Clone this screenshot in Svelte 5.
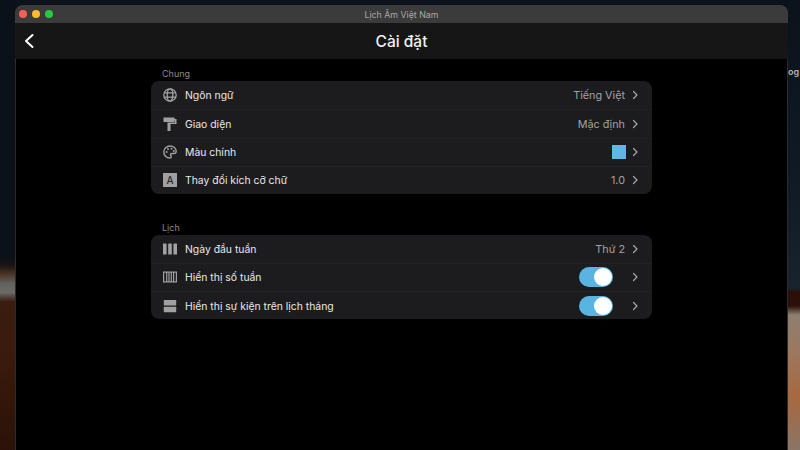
<script>
  const general = [
    { icon: 'globe', label: 'Ngôn ngữ', value: 'Tiếng Việt' },
    { icon: 'roller', label: 'Giao diện', value: 'Mặc định' },
    { icon: 'palette', label: 'Màu chính', swatch: true },
    { icon: 'font', label: 'Thay đổi kích cỡ chữ', value: '1.0' }
  ];
  const calendar = [
    { icon: 'cols', label: 'Ngày đầu tuần', value: 'Thứ 2' },
    { icon: 'week', label: 'Hiển thị số tuần', toggle: true },
    { icon: 'rows', label: 'Hiển thị sự kiện trên lịch tháng', toggle: true }
  ];
  const groups = [
    { title: 'Chung', rows: general },
    { title: 'Lịch', rows: calendar }
  ];
</script>

<div class="desktop">
  <div class="wall left"></div>
  <main class="window">
    <div class="titlebar">
      <div class="lights"><i class="red"></i><i class="yellow"></i><i class="green"></i></div>
      <span>Lịch Âm Việt Nam</span>
    </div>
    <header class="appbar">
      <svg class="back" viewBox="0 0 12 16" width="12" height="16"><path d="M9.500 2 L3 8 L9.500 14" fill="none" stroke="#fff" stroke-width="2" stroke-linecap="round" stroke-linejoin="round"/></svg>
      <h1>Cài đặt</h1>
    </header>
    <div class="content">
      {#each groups as group}
        <section class="group">
          <h2>{group.title}</h2>
          <div class="card">
            {#each group.rows as row}
              <div class="row">
                <svg class="icon" viewBox="0 0 14 14" width="14" height="14">
                  {#if row.icon === 'globe'}
                    <g fill="none" stroke="#a0a0a0" stroke-width="1.300"><circle cx="7" cy="7" r="6.200"/><ellipse cx="7" cy="7" rx="2.800" ry="6.200"/><path d="M1.200 4.800h11.600M1.200 9.200h11.600"/></g>
                  {:else if row.icon === 'roller'}
                    <path fill="#a0a0a0" d="M.5 .5H11.500V2H13.500V7H7.500V14H4.500V5.500H12V3.500H11.500V5H.5z"/>
                  {:else if row.icon === 'palette'}
                    <path fill="none" stroke="#a0a0a0" stroke-width="1.400" d="M7 1C3.500 1 .8 3.700.8 7s2.700 6 6 6c1 0 1.500-.6 1.500-1.300 0-1-.8-1.200-.8-2 0-.7.6-1.200 1.300-1.200h2c1.300 0 2.400-1 2.400-2.300C13.200 3.300 10.500 1 7 1z"/>
                    <g fill="#a0a0a0"><circle cx="3.700" cy="7" r="1"/><circle cx="5" cy="4" r="1"/><circle cx="8.500" cy="3.700" r="1"/><circle cx="10.800" cy="6" r="1"/></g>
                  {:else if row.icon === 'font'}
                    <rect width="14" height="14" fill="#a0a0a0"/>
                    <text x="7" y="11.200" text-anchor="middle" class="glyph">A</text>
                  {:else if row.icon === 'cols'}
                    <g fill="#a0a0a0"><rect y="1.500" width="3.600" height="11" rx=".6"/><rect x="5.200" y="1.500" width="3.600" height="11" rx=".6"/><rect x="10.400" y="1.500" width="3.600" height="11" rx=".6"/></g>
                  {:else if row.icon === 'week'}
                    <rect x=".6" y="2.100" width="12.800" height="9.800" fill="none" stroke="#a0a0a0" stroke-width="1.200"/>
                    <path d="M3.700 2.100v9.800M6 2.100v9.800M8.300 2.100v9.800M10.600 2.100v9.800" stroke="#a0a0a0" stroke-width="1.200"/>
                  {:else}
                    <g fill="#a0a0a0"><rect x=".8" y="1" width="12.400" height="5.500" rx=".6"/><rect x=".8" y="7.700" width="12.400" height="5.500" rx=".6"/></g>
                  {/if}
                </svg>
                <span class="label">{row.label}</span>
                {#if row.value}<span class="value">{row.value}</span>{/if}
                {#if row.swatch}<span class="swatch"></span>{/if}
                {#if row.toggle}<span class="toggle"><b></b></span>{/if}
                <svg class="chev" viewBox="0 0 7 10" width="7" height="10"><path d="M1.500 1.500 L5 5 L1.500 8.500" fill="none" stroke="#a8a8a8" stroke-width="1.200" stroke-linecap="round" stroke-linejoin="round"/></svg>
              </div>
            {/each}
          </div>
        </section>
      {/each}
    </div>
  </main>
  <div class="wall right"><span>og</span></div>
</div>

<style>
  :global(body) { margin: 0; background: #000; }
  .desktop {
    width: 800px; height: 450px; overflow: hidden; display: flex; padding-top: 5px; box-sizing: border-box;
    background: #0b121b;
    font-family: Inter, "Liberation Sans", sans-serif;
  }
  .wall { flex: none; align-self: stretch; margin-top: -5px; }
  .left {
    width: 15px;
    background: linear-gradient(#0a1119 0, #0a1119 57%, #1a1512 59%, #4d3528 61%, #60625f 63%, #6a6a66 65%, #3a1d10 67%, #3a1a0c 80%, #2a1208 100%);
  }
  .right {
    width: 12px; overflow: hidden; white-space: nowrap;
    padding-top: 67px; box-sizing: border-box; font-size: 9px; line-height: 10px; font-weight: 600; color: #b5b5b5;
    background: linear-gradient(#0b131c 0, #0f1a24 40%, #18232e 64%, #2a0f08 65%, #2c1009 68%, #8c7f70 70%, #9c7860 78%, #a8683f 88%, #8a7566 100%);
  }
  .window { flex: none; width: 773px; height: 445px; background: #000; border-radius: 8px 8px 0 0; overflow: hidden; box-shadow: inset 1px 0 #2c2c2c, inset -1px 0 #2c2c2c; position: relative; }
  .titlebar {
    height: 18px; background: #3b3b3b; display: flex; align-items: center; justify-content: center; position: relative;
    font-size: 8.800px; color: #a9a9a9;
  }
  .lights { position: absolute; left: 4px; top: 5px; display: flex; gap: 5px; }
  .lights i { width: 8px; height: 8px; border-radius: 50%; display: block; }
  .red { background: #f85f5a; }
  .yellow { background: #febc2e; }
  .green { background: #28c840; }
  .appbar {
    height: 36px; background: #161616; display: flex; align-items: center; justify-content: center; position: relative;
  }
  .back { position: absolute; left: 8px; top: 10px; }
  h1 { margin: 0; font-size: 15.500px; font-weight: 500; color: #f2f2f2; }
  .content { padding: 9px 136px 0; display: flex; flex-direction: column; gap: 27.500px; }
  h2 { margin: 0 0 1px 11px; font-size: 9px; line-height: 12px; font-weight: 400; color: #8a8a8a; }
  .card { background: #1c1c1e; border-radius: 8px; overflow: hidden; }
  .row {
    height: 28.250px; display: flex; align-items: center; padding: 0 13px 0 12px; box-sizing: border-box;
    border-top: 1px solid #232325; font-size: 10.400px; color: #e8e8e8;
  }
  .row:first-child { border-top: 0; }
  .icon { flex: none; margin-right: 8px; }
  .glyph { font-size: 10px; fill: #2a2a2a; font-weight: 500; }
  .label { flex: 1; padding-top: 1px; }
  .value { color: #a2a2a2; margin-right: 7px; font-size: 10.800px; padding-top: 1px; }
  .swatch { width: 14px; height: 14px; background: #5fb7e6; margin-right: 6px; }
  .toggle {
    width: 34px; height: 20px; border-radius: 10px; background: #5ab4e2; margin-right: 19px; position: relative;
  }
  .toggle b { position: absolute; right: 1px; top: 1px; width: 18px; height: 18px; border-radius: 50%; background: #fff; }
  .chev { flex: none; }
</style>
